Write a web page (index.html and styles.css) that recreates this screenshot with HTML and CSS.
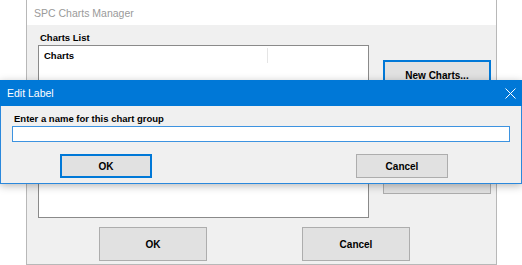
FILE: index.html
```html
<!DOCTYPE html>
<html>
<head>
<meta charset="utf-8">
<link rel="stylesheet" href="styles.css">
</head>
<body>
<div class="desktop">
  <div class="win main">
    <div class="titlebar inactive">SPC Charts Manager</div>
    <div class="winbody">
      <div class="toprow">
        <div class="leftcol">
          <div class="label">Charts List</div>
          <div class="listbox">
            <div class="listhead">
              <span class="colhead">Charts</span>
              <span class="colsep"></span>
            </div>
          </div>
        </div>
        <div class="rightcol">
          <button class="btn side default">New Charts...</button>
          <button class="btn side second"></button>
        </div>
      </div>
      <div class="bottomrow">
        <button class="btn big">OK</button>
        <button class="btn big">Cancel</button>
      </div>
    </div>
  </div>

  <div class="win dialog">
    <div class="titlebar active">
      <span>Edit Label</span>
      <svg class="close" width="11" height="11" viewBox="0 0 11 11"><path d="M0.5 0.5 L10.5 10.5 M10.5 0.5 L0.5 10.5" stroke="#fff" stroke-width="1" fill="none"/></svg>
    </div>
    <div class="dlgbody">
      <div class="label">Enter a name for this chart group</div>
      <div class="textbox"></div>
      <div class="dlgbuttons">
        <button class="btn small default">OK</button>
        <button class="btn small">Cancel</button>
      </div>
    </div>
  </div>
</div>
</body>
</html>
```

FILE: styles.css
```css
html, body {
  margin: 0;
  padding: 0;
  background: #ffffff;
  width: 522px;
  height: 265px;
  overflow: hidden;
}

.desktop {
  position: relative;
  width: 522px;
  height: 265px;
}

.win {
  box-sizing: border-box;
  display: flex;
  flex-direction: column;
}

.main {
  position: absolute;
  left: 26px;
  top: -1px;
  width: 471px;
  height: 266px;
  border: 1px solid #b8b8b8;
  background: #f0f0f0;
}

.titlebar {
  font-family: "Liberation Sans", Arial, sans-serif;
  font-size: 10.5px;
  display: flex;
  align-items: center;
}

.titlebar.inactive {
  height: 25px;
  background: #ffffff;
  color: #9a9a9a;
  padding-left: 7px;
  padding-top: 1px;
  box-sizing: border-box;
}

.winbody {
  flex: 1;
  display: flex;
  flex-direction: column;
  padding: 7px 0 0 11px;
}

.toprow {
  display: flex;
}

.label {
  font-family: "Liberation Sans", Arial, sans-serif;
  font-size: 9.5px;
  font-weight: bold;
  line-height: 12px;
  height: 12px;
  margin-left: 2px;
  margin-bottom: 1px;
  color: #000;
}

.listbox {
  box-sizing: border-box;
  width: 331px;
  height: 173px;
  border: 1px solid #8a8a8a;
  background: #fff;
}

.listhead {
  display: flex;
  height: 17px;
  align-items: center;
  font-family: "Liberation Sans", Arial, sans-serif;
  font-size: 9.5px;
  font-weight: bold;
  color: #000;
}

.colhead {
  width: 223px;
  padding-left: 5px;
  padding-top: 2px;
}

.colsep {
  width: 1px;
  height: 15px;
  background: #e5e5e5;
  margin-top: 2px;
}

.rightcol {
  display: flex;
  flex-direction: column;
  margin-left: 14px;
  padding-top: 28px;
}

.btn {
  box-sizing: border-box;
  background: #e1e1e1;
  border: 1px solid #adadad;
  font-family: "Liberation Sans", Arial, sans-serif;
  font-size: 9.5px;
  font-weight: bold;
  color: #000;
  padding: 0;
  margin: 0;
}

.btn.default {
  border: 2px solid #0078d7;
}

.btn.side {
  width: 108px;
  height: 34px;
  padding-bottom: 3px;
  font-size: 10px;
}

.btn.side.second {
  margin-top: 66px;
}

.bottomrow {
  display: flex;
  margin-top: 9px;
  padding-left: 61px;
  gap: 95px;
}

.btn.big {
  width: 108px;
  height: 34px;
  font-size: 10px;
}

.dialog {
  position: absolute;
  left: 0;
  top: 80px;
  width: 522px;
  height: 104px;
  border: 1px solid #2a88dc;
  border-top: none;
  background: #f0f0f0;
  box-shadow: 0 2px 8px rgba(0, 0, 0, 0.28);
}

.titlebar.active {
  height: 26px;
  background: #0078d7;
  color: #fff;
  padding-left: 7px;
  padding-right: 6px;
  box-sizing: border-box;
  justify-content: space-between;
  margin: 0 -1px;
}

.close {
  display: block;
}

.dlgbody {
  display: flex;
  flex-direction: column;
  padding: 6px 11px 0 11px;
}

.dlgbody .label {
  line-height: 13px;
  height: 13px;
  margin-left: 2px;
  margin-bottom: 1px;
}

.textbox {
  box-sizing: border-box;
  width: 498px;
  height: 16px;
  border: 1px solid #3d93e0;
  background: #fff;
}

.dlgbuttons {
  display: flex;
  justify-content: space-between;
  margin-top: 12px;
  padding: 0 62px 0 48px;
}

.btn.small {
  width: 92px;
  height: 24px;
  font-size: 10px;
}
```
